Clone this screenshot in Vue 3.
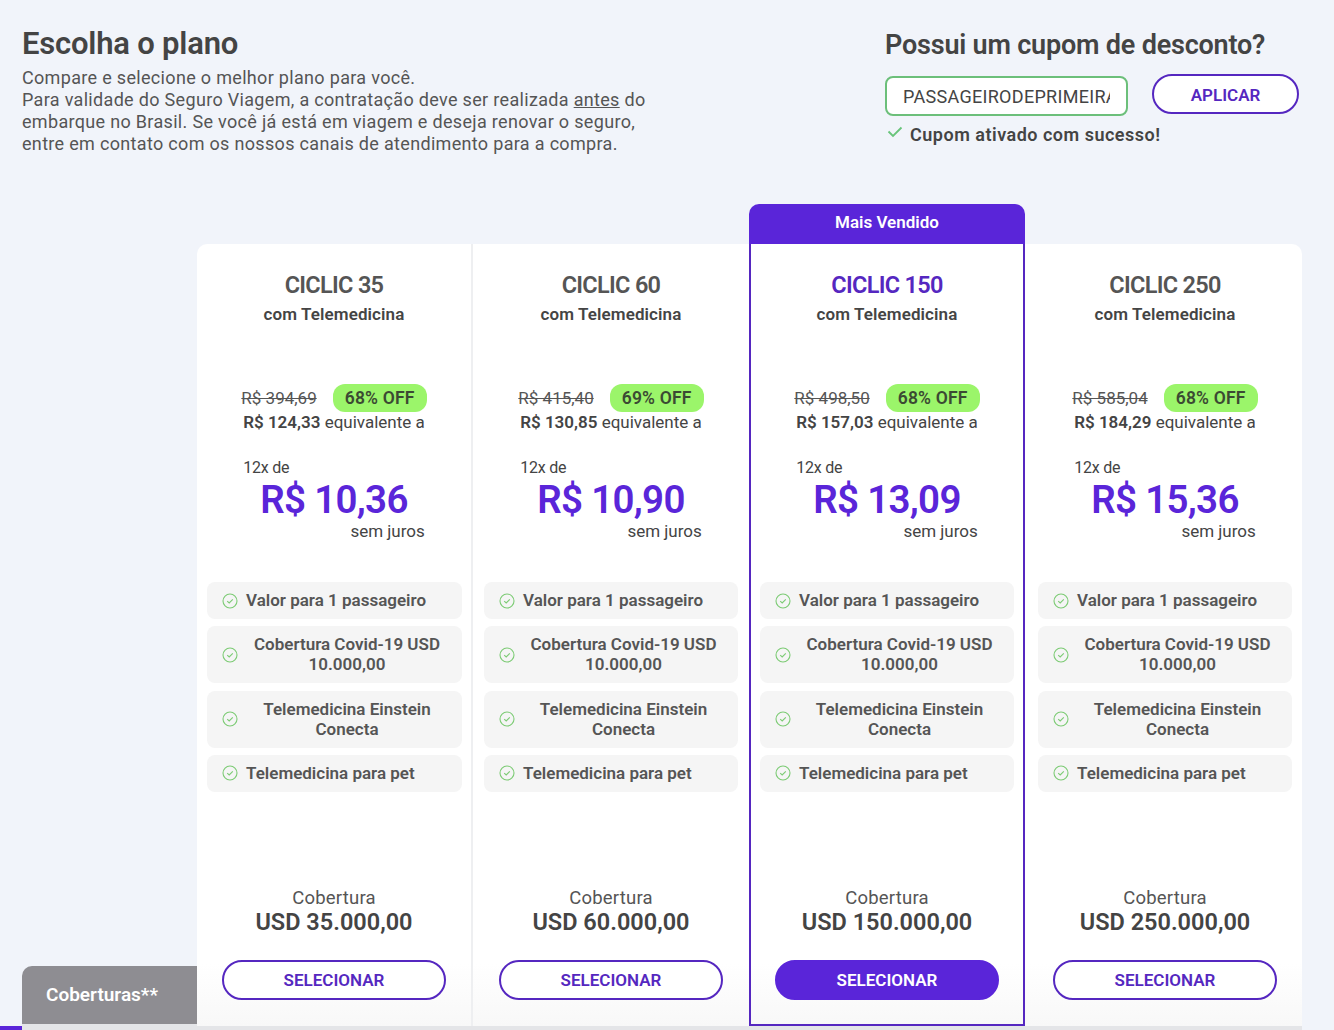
<script setup>
const features = [
  'Valor para 1 passageiro',
  'Cobertura Covid-19 USD 10.000,00',
  'Telemedicina Einstein Conecta',
  'Telemedicina para pet'
]

const plans = [
  { name: 'CICLIC 35', oldPrice: 'R$ 394,69', off: '68% OFF', total: 'R$ 124,33', installment: 'R$ 10,36', cover: 'USD 35.000,00' },
  { name: 'CICLIC 60', oldPrice: 'R$ 415,40', off: '69% OFF', total: 'R$ 130,85', installment: 'R$ 10,90', cover: 'USD 60.000,00' },
  { name: 'CICLIC 150', oldPrice: 'R$ 498,50', off: '68% OFF', total: 'R$ 157,03', installment: 'R$ 13,09', cover: 'USD 150.000,00', featured: true },
  { name: 'CICLIC 250', oldPrice: 'R$ 585,04', off: '68% OFF', total: 'R$ 184,29', installment: 'R$ 15,36', cover: 'USD 250.000,00' }
]
</script>

<template>
  <div class="page">
    <header class="top">
      <div class="intro">
        <h1>Escolha o plano</h1>
        <p>
          Compare e selecione o melhor plano para você.<br />
          Para validade do Seguro Viagem, a contratação deve ser realizada <u>antes</u> do<br />
          embarque no Brasil. Se você já está em viagem e deseja renovar o seguro,<br />
          entre em contato com os nossos canais de atendimento para a compra.
        </p>
      </div>
      <div class="coupon">
        <h2>Possui um cupom de desconto?</h2>
        <div class="coupon-form">
          <input class="coupon-input" type="text" value="PASSAGEIRODEPRIMEIRA" readonly />
          <button class="btn coupon-btn">APLICAR</button>
        </div>
        <div class="coupon-ok">
          <svg width="16" height="12" viewBox="0 0 16 12" fill="none">
            <path d="M1.5 5.5 L6 10 L14.5 1.5" stroke="#68c47a" stroke-width="1.8" />
          </svg>
          <span>Cupom ativado com sucesso!</span>
        </div>
      </div>
    </header>

    <section class="plans">
      <div class="side">
        <div class="side-tab">Coberturas**</div>
      </div>
      <div class="cards">
        <article v-for="plan in plans" :key="plan.name" :class="['plan', { featured: plan.featured }]">
          <div v-if="plan.featured" class="flag">Mais Vendido</div>
          <h3>{{ plan.name }}</h3>
          <div class="subtitle">com Telemedicina</div>

          <div class="discount">
            <s>{{ plan.oldPrice }}</s>
            <span class="off">{{ plan.off }}</span>
          </div>
          <div class="pricing">
            <div class="total"><b>{{ plan.total }}</b> equivalente a</div>
            <div class="times">12x de</div>
            <div class="installment">{{ plan.installment }}</div>
            <div class="no-interest">sem juros</div>
          </div>

          <ul class="features">
            <li v-for="f in features" :key="f">
              <svg class="check" width="16" height="16" viewBox="0 0 16 16" fill="none">
                <circle cx="8" cy="8" r="7" stroke="#7ccb74" stroke-width="1.1" />
                <path d="M5.2 8.1 L7.2 10 L10.8 6.3" stroke="#7ccb74" stroke-width="1.1" />
              </svg>
              <span>{{ f }}</span>
            </li>
          </ul>

          <div class="cover">
            <div class="cover-label">Cobertura</div>
            <div class="cover-value">{{ plan.cover }}</div>
          </div>
          <button :class="['btn', 'select', { solid: plan.featured }]">SELECIONAR</button>
        </article>
      </div>
    </section>

    <footer class="strip">
      <span class="strip-accent"></span>
      <span class="strip-line"></span>
    </footer>
  </div>
</template>

<style>
html, body {
  margin: 0;
  background: #f1f4fa;
}
</style>

<style scoped>
.page {
  height: 1030px;
  overflow: hidden;
  display: flex;
  flex-direction: column;
  font-family: Roboto, "Noto Sans", sans-serif;
  color: #444;
  background: #f1f4fa;
}

.top {
  height: 244px;
  flex: none;
  display: flex;
  justify-content: space-between;
  padding: 25px 35px 0 22px;
  box-sizing: border-box;
}
h1 {
  margin: 0 0 4px;
  font-size: 31px;
  line-height: 38px;
  font-weight: 600;
  color: #444;
  letter-spacing: -0.2px;
}
.intro p {
  margin: 0;
  font-size: 18px;
  line-height: 22px;
  color: #555;
  white-space: nowrap;
  letter-spacing: 0.32px;
}

.coupon {
  width: 414px;
}
h2 {
  margin: 3px 0 12px;
  font-size: 27px;
  line-height: 34px;
  font-weight: 600;
  color: #444;
  white-space: nowrap;
  letter-spacing: -0.2px;
}
.coupon-form {
  display: flex;
  align-items: flex-start;
  gap: 24px;
}
.coupon-input {
  width: 243px;
  height: 40px;
  margin-top: 2px;
  padding: 0 16px;
  box-sizing: border-box;
  border: 2px solid #6cbf7a;
  border-radius: 8px;
  background: #fff;
  font-family: inherit;
  font-size: 18px;
  color: #444;
  outline: none;
  letter-spacing: 0.3px;
}
.btn {
  height: 40px;
  border: 2px solid #5527c0;
  border-radius: 20px;
  background: #fff;
  font-family: inherit;
  font-size: 17px;
  font-weight: 600;
  color: #5527c0;
  cursor: pointer;
  padding: 0;
}
.coupon-btn {
  width: 147px;
  padding-top: 1px;
}
.coupon-ok {
  display: flex;
  align-items: flex-start;
  gap: 7px;
  margin: 8px 0 0 2px;
  font-size: 18px;
  line-height: 22px;
  font-weight: 600;
  color: #444;
  letter-spacing: 0.5px;
}
.coupon-ok svg {
  margin-top: 2px;
}

.plans {
  flex: 1;
  min-height: 0;
  display: flex;
  padding-left: 22px;
}
.side {
  width: 175px;
  flex: none;
  display: flex;
  align-items: flex-end;
}
.side-tab {
  width: 100%;
  height: 60px;
  padding: 18px 0 0 24px;
  box-sizing: border-box;
  background: #8e8d92;
  border-bottom: 2px solid #e4e5e8;
  border-radius: 10px 0 0 0;
  color: #fff;
  font-size: 19px;
  line-height: 22px;
  font-weight: 600;
}
.cards {
  width: 1105px;
  display: grid;
  grid-template-columns: 276px 276px 276px 277px;
  background: linear-gradient(180deg, #fff 0%, #fff 92%, #f8f8f8 100%);
  border-radius: 10px 10px 0 0;
}
.plan {
  position: relative;
  display: flex;
  flex-direction: column;
  align-items: center;
  padding: 0 11px;
  box-sizing: border-box;
  text-align: center;
}
.plan:nth-child(1) {
  padding: 0 10px;
  border-right: 2px solid #eeeff1;
}
.plan:nth-child(1) .features {
  width: calc(100% + 1px);
  margin-right: -1px;
}
.plan:nth-child(4) {
  padding: 0 10px 0 13px;
}
.plan.featured {
  border: 2px solid #5527c0;
  border-top: 0;
  padding: 0 9px;
}
.featured h3 {
  color: #5527c0;
}
.flag {
  position: absolute;
  left: -2px;
  right: -2px;
  bottom: 100%;
  height: 40px;
  line-height: 36px;
  background: #5a25d9;
  border-radius: 10px 10px 0 0;
  color: #fff;
  font-size: 17px;
  font-weight: 600;
}

h3 {
  margin: 27px 0 0;
  font-size: 23.5px;
  line-height: 28px;
  font-weight: 600;
  color: #555;
  letter-spacing: -0.7px;
}
.subtitle {
  margin-top: 4px;
  font-size: 17px;
  line-height: 22px;
  font-weight: 600;
  color: #444;
  letter-spacing: 0.1px;
}
.discount {
  display: flex;
  align-items: center;
  gap: 16px;
  margin-top: 59px;
  height: 28px;
}
s {
  font-size: 17px;
  color: #555;
}
.off {
  height: 28px;
  line-height: 28px;
  padding: 0 12px;
  border-radius: 12px;
  background: #9bf56a;
  font-size: 17.5px;
  font-weight: 600;
  color: #3b4a33;
  letter-spacing: 0.2px;
}
.pricing {
  width: fit-content;
}
.total {
  font-size: 17px;
  line-height: 21px;
  white-space: nowrap;
  color: #444;
}
.total b {
  font-weight: 600;
}
.times {
  margin-top: 24px;
  font-size: 16px;
  line-height: 22px;
  text-align: left;
  color: #444;
  letter-spacing: -0.2px;
}
.installment {
  font-size: 38.5px;
  line-height: 42px;
  font-weight: 600;
  color: #5a25d9;
  text-align: center;
  letter-spacing: -0.7px;
}
.no-interest {
  font-size: 17px;
  line-height: 20px;
  text-align: right;
  color: #444;
}
.features {
  width: 100%;
  list-style: none;
  margin: 41px 0 0;
  padding: 0;
  display: flex;
  flex-direction: column;
  gap: 7.34px;
}
.features li {
  display: flex;
  align-items: center;
  min-height: 37px;
  padding: 8px 14px 9px 15px;
  box-sizing: border-box;
  background: #f5f5f5;
  border-radius: 8px;
  font-size: 17px;
  line-height: 20px;
  font-weight: 600;
  color: #555;
}
.features span {
  margin-left: 8px;
}
.check {
  flex: none;
  margin-top: 1px;
}
.cover {
  margin-top: auto;
}
.cover-label {
  font-size: 18.5px;
  line-height: 20px;
  color: #555;
  letter-spacing: 0.2px;
}
.cover-value {
  font-size: 23.5px;
  line-height: 28px;
  font-weight: 600;
  color: #444;
}
.select {
  flex: none;
  width: 224px;
  margin: 24px 0 26px;
}
.solid {
  background: #5a25d9;
  border-color: #5a25d9;
  color: #fff;
}
.featured .select {
  margin-bottom: 24px;
}

.strip {
  height: 4px;
  flex: none;
  display: flex;
}
.strip-accent {
  width: 22px;
  background: #5a25d9;
}
.strip-line {
  width: 1280px;
  background: #e4e5e8;
}
</style>
